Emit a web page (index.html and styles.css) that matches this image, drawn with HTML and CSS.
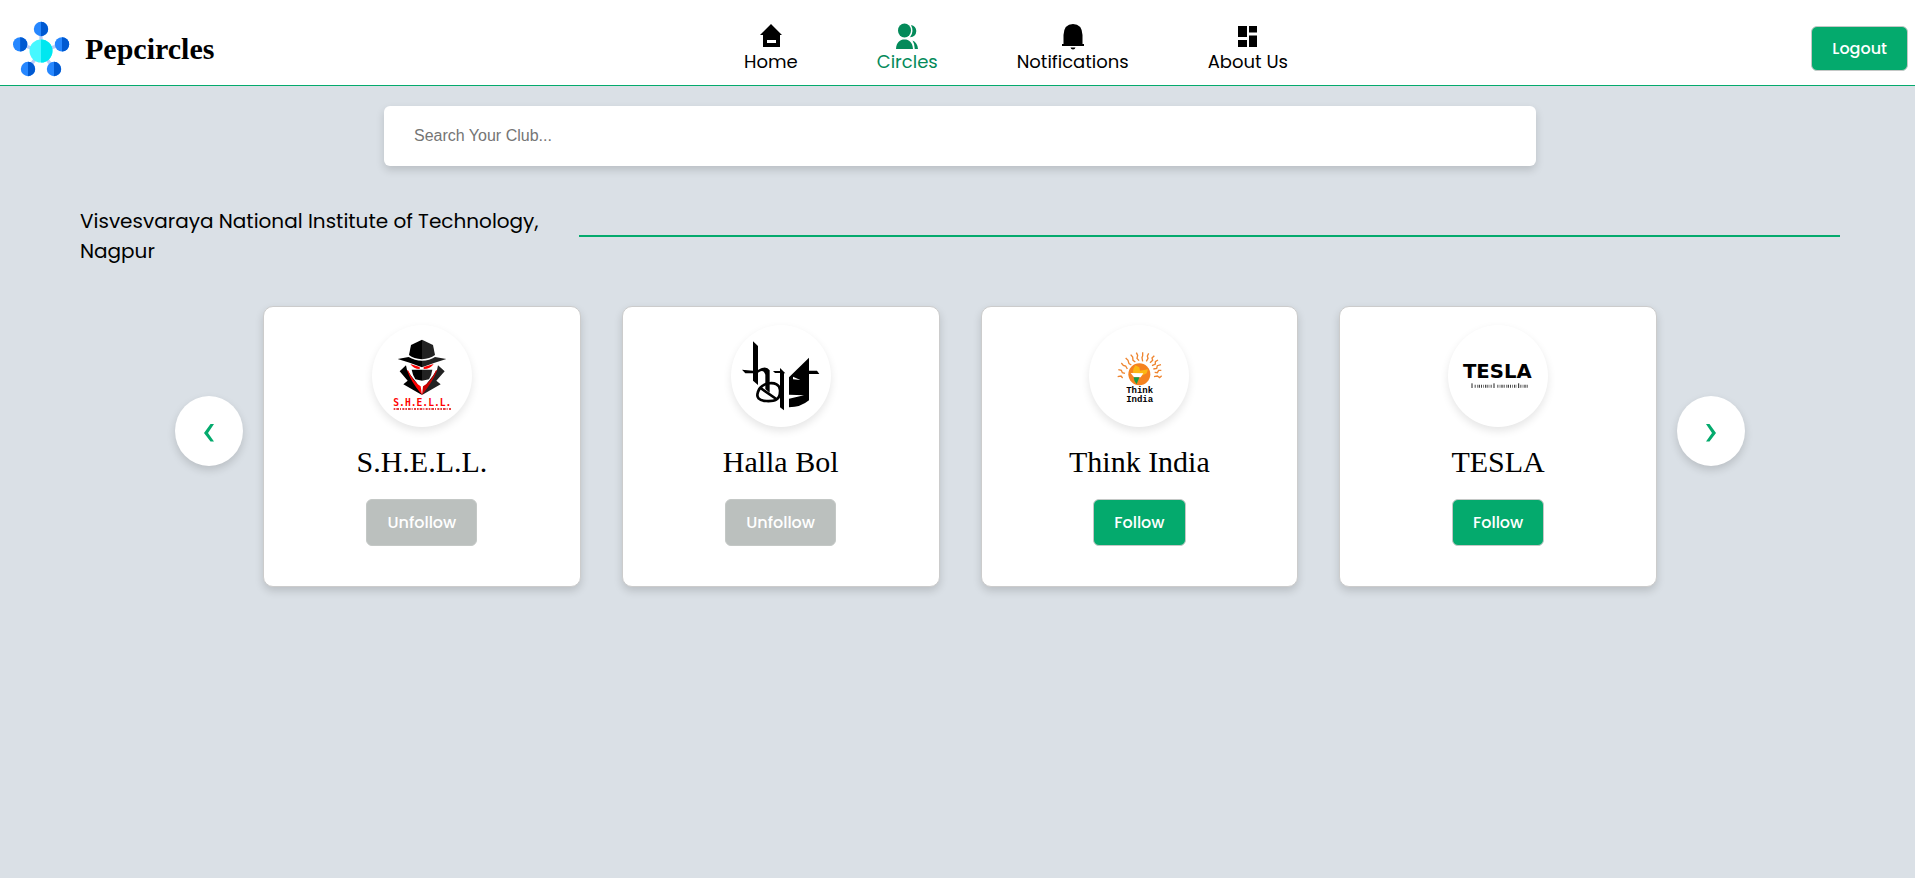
FILE: index.html
```html
<!DOCTYPE html>
<html lang="en">
<head>
<meta charset="utf-8">
<meta name="viewport" content="width=device-width, initial-scale=1">
<title>Pepcircles</title>
<link rel="stylesheet" href="styles.css">
</head>
<body>
<header class="topbar">
  <a class="brand" href="#">
    <svg class="brand-logo" viewBox="36 60 174 174" aria-hidden="true">
      <path d="M123 153V87M123 153L60 133M123 153L186 133M123 153L84 207M123 153L162 207" stroke="#b9cdf8" stroke-width="10"/>
      <g fill="#2687ff"><circle cx="123" cy="87" r="21.500"/><circle cx="60.500" cy="133" r="21.500"/><circle cx="186" cy="133" r="21.500"/><circle cx="84" cy="207" r="21.500"/><circle cx="162" cy="207" r="21.500"/></g>
      <g fill="#0059d1"><path d="M123 65.500a21.500 21.500 0 0 1 0 43zM60.500 111.500a21.500 21.500 0 0 1 0 43zM186 111.500a21.500 21.500 0 0 1 0 43zM84 185.500a21.500 21.500 0 0 1 0 43zM162 185.500a21.500 21.500 0 0 1 0 43z"/></g>
      <circle cx="123" cy="153" r="34.500" fill="#46f8ff"/>
      <path d="M123 118.500a34.500 34.500 0 0 1 0 69z" fill="#00e7f0"/>
    </svg>
    <span class="brand-name">Pepcircles</span>
  </a>
  <nav class="nav" aria-label="Main">
    <a class="nav-link" href="#">
      <svg class="nav-icon" viewBox="0 0 26 26" aria-hidden="true"><path fill-rule="evenodd" d="M13 1L24 12H22V24H5V12H2zM9 17V20H18V17z"/></svg>
      <span>Home</span>
    </a>
    <a class="nav-link nav-link-active" href="#">
      <svg class="nav-icon" viewBox="0 0 26 26" aria-hidden="true"><ellipse cx="10.500" cy="7.500" rx="6.500" ry="7"/><path d="M2 26C2.500 19 6 16.500 10.500 16.500S18.500 19 19 26zM16 14.300Q20.500 8.500 17 2Q22 3 22.300 8Q22 14 16 14.300zM18.500 17.500Q23.500 19.500 24 26H20.800Q20.800 21 18.500 17.500z"/></svg>
      <span>Circles</span>
    </a>
    <a class="nav-link" href="#">
      <svg class="nav-icon" viewBox="0 0 26 26" aria-hidden="true"><path d="M3.500 21V12Q4 1 13 1T22.500 12V21H24V23H2V21zM10.500 24.500H15.500Q15 26.500 13 26.500T10.500 24.500z"/></svg>
      <span>Notifications</span>
    </a>
    <a class="nav-link" href="#">
      <svg class="nav-icon" viewBox="0 0 26 26" aria-hidden="true"><path d="M3 3H12V14H3zM14 3H22V9.500H14zM3 17H12V24H3zM14 12.500H22V24H14z"/></svg>
      <span>About Us</span>
    </a>
  </nav>
  <div class="account"><button class="button logout" type="button">Logout</button></div>
</header>

<main class="page">
  <input class="search" type="search" placeholder="Search Your Club..." aria-label="Search Your Club">

  <div class="section-head">
    <h1 class="section-title">Visvesvaraya National Institute of Technology, Nagpur</h1>
    <hr class="section-line">
  </div>

  <div class="carousel">
    <button class="arrow" type="button" aria-label="Previous clubs">
      <svg class="arrow-icon" viewBox="0 0 10 18" aria-hidden="true"><path d="M6.500 0H10L4 9L10 17.500H6.500L0 9z"/></svg>
    </button>
    <div class="cards">
      <article class="card">
        <svg class="club-logo" viewBox="97 15 300 306" role="img" aria-label="S.H.E.L.L. logo">
          <path d="M208 105L214 75L247 59V118Q222 116 208 105z"/>
          <path d="M247 59L280 75L286 105Q270 116 247 118z" fill="#222"/>
          <path d="M174 117L207 111Q225 122 247 122V142L210 128z"/>
          <path d="M320 117L286 111Q270 122 247 122V142L285 128z" fill="#222"/>
          <path d="M212 132L240 141V147Q222 147 212 132zM282 132L252 141V147Q272 147 282 132z" fill="red"/>
          <path d="M216 149H247V182L227 178Q219 165 216 149z"/>
          <path d="M278 149H247V182L268 178Q276 165 278 149z" fill="#222"/>
          <path d="M199 136L180 154L204 182L191 193L247 225L232 190Q214 168 202 150z"/>
          <path d="M295 136L315 154L290 182L303 193L247 225L262 190Q280 168 292 150z" fill="#222"/>
          <path d="M202 150L206 152Q220 184 243 199L247 225Q213 184 202 150z" fill="red"/>
          <path d="M293 150L288 152Q275 184 250 199L247 225Q280 184 293 150z" fill="#c80000"/>
          <text class="logo-shell" x="248" y="258" text-anchor="middle">S.H.E.L.L.</text>
          <path d="M162 267H334" stroke="#d00" stroke-width="5" stroke-dasharray="5 3 8 3 3 4 6 3"/>
        </svg>
        <h2 class="club-name">S.H.E.L.L.</h2>
        <button class="button button-muted" type="button">Unfollow</button>
      </article>
      <article class="card">
        <svg class="club-logo" viewBox="93 15 300 306" role="img" aria-label="Halla Bol logo">
          <path d="M159 64L174 78V195L159 182zM126 149L159 152V160H136zM174 150Q198 134 209 151V218L196 207V164Q190 145 174 158zM219 153H240V144L256 160H252V271L240 262V159H225z"/>
          <path d="M174 216C180 186 238 178 240 210S222 244 199 243S168 232 174 216zM180 203L229 237" fill="none" stroke="#000" stroke-width="8"/>
          <path d="M267 172L327 113V152H351L358 162H327V241Q302 262 267 262z"/>
          <path d="M279 170L301 180L279 178zM267 224L312 226L267 236z" fill="#fff"/>
        </svg>
        <h2 class="club-name">Halla Bol</h2>
        <button class="button button-muted" type="button">Unfollow</button>
      </article>
      <article class="card">
        <svg class="club-logo" viewBox="87 15 300 306" role="img" aria-label="Think India logo">
          <circle cx="238" cy="163" r="33" fill="#f58220"/>
          <path d="M220 147L226 136L238 142L240 152L264 148L260 160L248 166H218z" fill="#fcb614"/>
          <path d="M212 159L250 160L242 172H222z" fill="#fff"/>
          <path d="M221 172H238L230 193Q222 186 221 172z" fill="#119a48"/>
          <path fill="none" stroke="#ee8530" stroke-width="4" d="M173 170L183 168L188 174M175 149L184 151L187 158L195 160M184 129L190 136L197 138L202 147M197 114L204 121L207 131L214 135M212 104L218 111L219 121L226 126M229 98L233 106L231 115L237 122M248 97V107L246 113L248 124M266 100L262 108L264 115L259 124M283 107L276 114L278 121L270 128M294 120L286 125L286 132L276 137M303 134L292 137L290 145L280 147M304 151L296 151L292 158L284 157M305 167L299 173L292 168L282 170"/>
          <text class="logo-think" x="239" y="220" text-anchor="middle">Think</text>
          <text class="logo-think" x="239" y="246" text-anchor="middle">India</text>
        </svg>
        <h2 class="club-name">Think India</h2>
        <button class="button" type="button">Follow</button>
      </article>
      <article class="card">
        <svg class="club-logo" viewBox="84 15 300 306" role="img" aria-label="TESLA logo">
          <text class="logo-tesla" x="232" y="174" text-anchor="middle">TESLA</text>
          <path d="M156 190V204M222 190V204M296 190V204" stroke="#222" stroke-width="3"/>
          <path d="M164 199H216M232 199H290M301 199H323" stroke="#444" stroke-width="9" stroke-dasharray="3 4 2 3 4 3"/>
        </svg>
        <h2 class="club-name">TESLA</h2>
        <button class="button" type="button">Follow</button>
      </article>
    </div>
    <button class="arrow" type="button" aria-label="Next clubs">
      <svg class="arrow-icon" viewBox="0 0 10 18" aria-hidden="true"><path d="M3.500 0H0L6 9L0 17.500H3.500L10 9z"/></svg>
    </button>
  </div>
</main>
</body>
</html>
```

FILE: styles.css
```css
* {
  box-sizing: border-box;
}

body {
  margin: 0;
  min-height: 100vh;
  background: #dae0e6;
  color: #000;
  font-family: Poppins, Inter, sans-serif;
}

.topbar {
  display: grid;
  grid-template-columns: 1fr auto 1fr;
  align-items: center;
  padding: 12px 7px 0 12px;
  height: 86px;
  background: #fff;
  border-bottom: 1px solid #04aa6d;
}

.brand {
  display: flex;
  align-items: center;
  gap: 15px;
  color: #000;
  text-decoration: none;
}

.brand-logo {
  width: 58px;
  height: 58px;
}

.brand-name {
  font: bold 30px "Liberation Serif", serif;
}

.nav {
  display: flex;
  gap: 79px;
  margin-left: 112px;
}

.nav-link {
  display: flex;
  flex-direction: column;
  align-items: center;
  color: #000;
  font-size: 18px;
  line-height: 26px;
  text-decoration: none;
}

.nav-link-active {
  color: #048a5a;
}

.nav-icon {
  width: 26px;
  height: 26px;
  fill: currentColor;
  overflow: visible;
}

.account {
  justify-self: end;
}

.button {
  padding: 10px 20px;
  border: 1px solid #c4c8c6;
  border-radius: 6px;
  background: #04aa6d;
  color: #fff;
  font: 500 16px/25px Poppins, Inter, sans-serif;
}

.logout {
  line-height: 23px;
}

.button-muted {
  background: #bbc0be;
}

.page {
  display: flex;
  flex-direction: column;
  padding: 20px 75px 40px 80px;
}

.search {
  align-self: center;
  width: 100%;
  max-width: 1152px;
  height: 60px;
  padding: 0 30px;
  border: 0;
  border-radius: 6px;
  background: #fff;
  box-shadow: 0 4px 8px rgba(0, 0, 0, 0.15);
  font: 16px "Liberation Sans", sans-serif;
}

.search::placeholder {
  color: #757575;
}

.section-head {
  display: flex;
  align-items: center;
  gap: 19px;
  margin-top: 40px;
}

.section-title {
  flex: 0 1 480px;
  margin: 0;
  font-size: 20px;
  font-weight: 400;
  line-height: 30px;
}

.section-line {
  flex: 1;
  height: 2px;
  margin: 0;
  border: 0;
  background: #04aa6d;
}

.carousel {
  display: flex;
  align-items: center;
  gap: 20px;
  margin-top: 40px;
  padding: 0 95px;
}

.arrow {
  display: flex;
  flex: none;
  align-items: center;
  justify-content: center;
  width: 68px;
  height: 70px;
  margin-bottom: 32px;
  padding: 4px 0 0;
  border: 0;
  border-radius: 50%;
  background: #fff;
  box-shadow: 0 4px 8px rgba(0, 0, 0, 0.15);
}

.arrow-icon {
  width: 10px;
  height: 18px;
  fill: #04aa6d;
}

.cards {
  display: grid;
  flex: 1;
  grid-template-columns: repeat(4, 1fr);
  gap: 41px;
}

.card {
  display: flex;
  flex-direction: column;
  align-items: center;
  padding: 18px 20px 40px;
  border: 1px solid #ccc;
  border-radius: 10px;
  background: #fff;
  box-shadow: 0 4px 8px rgba(0, 0, 0, 0.15);
}

.club-logo {
  width: 100px;
  height: 102px;
  border-radius: 50%;
  background: #fff;
  box-shadow: 0 4px 8px rgba(0, 0, 0, 0.1);
}

.club-name {
  margin: 17px 0 20px;
  font: 30px/35px "Liberation Serif", serif;
}

.logo-shell {
  font: bold 29px "DejaVu Sans Mono", monospace;
  fill: red;
}

.logo-think {
  font: bold 27px "Liberation Mono", monospace;
}

.logo-tesla {
  font: bold 59px "DejaVu Sans", sans-serif;
}
```
